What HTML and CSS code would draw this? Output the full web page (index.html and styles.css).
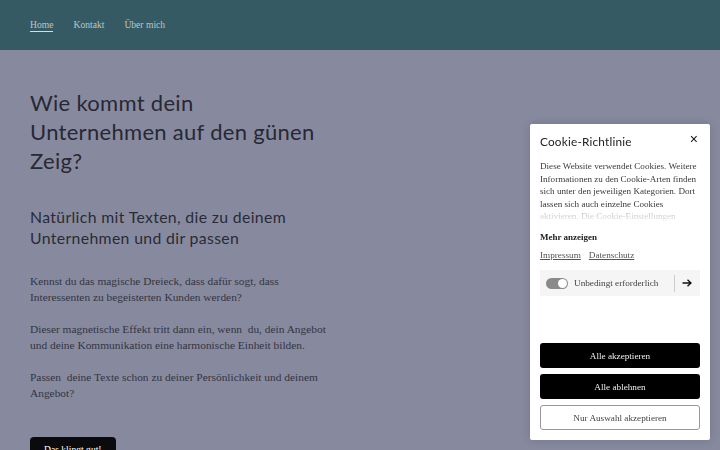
FILE: index.html
```html
<!DOCTYPE html>
<html lang="de">
<head>
    <meta charset="UTF-8">
    <meta name="viewport" content="width=device-width, initial-scale=1.0">
    <title>Texte für dein Unternehmen</title>
    <link rel="stylesheet" href="styles.css">
</head>
<body>
    <header class="site-header">
        <nav class="nav">
            <a href="#" class="nav-link active">Home</a>
            <a href="#" class="nav-link">Kontakt</a>
            <a href="#" class="nav-link">Über mich</a>
        </nav>
    </header>

    <main class="hero">
        <h1>Wie kommt dein<br>Unternehmen auf den günen<br>Zeig?</h1>
        <h2>Natürlich mit Texten, die zu deinem<br>Unternehmen und dir passen</h2>
        <p>Kennst du das magische Dreieck, dass dafür sogt, dass<br>Interessenten zu begeisterten Kunden werden?</p>
        <p>Dieser magnetische Effekt tritt dann ein, wenn&nbsp; du, dein Angebot<br>und deine Kommunikation eine harmonische Einheit bilden.</p>
        <p>Passen&nbsp; deine Texte schon zu deiner Persönlichkeit und deinem<br>Angebot?</p>
        <a href="#" class="btn">Das klingt gut!</a>
    </main>

    <aside class="cookie-box">
        <div class="cookie-head">
            <h3>Cookie-Richtlinie</h3>
            <button class="cookie-close">&times;</button>
        </div>
        <div class="cookie-text">
            <p>Diese Website verwendet Cookies. Weitere<br>Informationen zu den Cookie-Arten finden<br>sich unter den jeweiligen Kategorien. Dort<br>lassen sich auch einzelne Cookies<br>aktivieren. Die Cookie-Einstellungen</p>
        </div>
        <div class="cookie-more">Mehr anzeigen</div>
        <div class="cookie-links">
            <a href="#">Impressum</a>
            <a href="#">Datenschutz</a>
        </div>
        <div class="cookie-row">
            <span class="toggle"><span class="knob"></span></span>
            <span class="row-label">Unbedingt erforderlich</span>
            <span class="row-arrow">
                <svg width="10" height="8" viewBox="0 0 10 8"><path d="M0.5 4H9M5.5 0.8L9 4L5.5 7.2" fill="none" stroke="#111" stroke-width="1.3"/></svg>
            </span>
        </div>
        <div class="cookie-actions">
            <button class="cookie-btn dark">Alle akzeptieren</button>
            <button class="cookie-btn dark">Alle ablehnen</button>
            <button class="cookie-btn light">Nur Auswahl akzeptieren</button>
        </div>
    </aside>
</body>
</html>
```

FILE: styles.css
```css
body {
    margin: 0;
    padding: 0;
    background: #878a9f;
    font-family: 'Liberation Serif', 'DejaVu Serif', serif;
    color: #30313b;
    height: 450px;
    overflow: hidden;
}

.site-header {
    background: #365a63;
    height: 50px;
    display: flex;
    align-items: center;
    padding: 0 30px;
}

.nav {
    display: flex;
    gap: 20px;
}

.nav-link {
    color: #b9c6ca;
    text-decoration: none;
    font-size: 9.6px;
    padding-bottom: 1px;
}

.nav-link.active {
    border-bottom: 1px solid #d6dde0;
}

.hero {
    padding: 38px 30px 0;
}

h1 {
    font-family: Lato, 'Open Sans', sans-serif;
    font-weight: 400;
    font-size: 22px;
    line-height: 29px;
    letter-spacing: 0.3px;
    color: #272833;
    margin: 0 0 31px;
}

h2 {
    font-family: Lato, 'Open Sans', sans-serif;
    font-weight: 400;
    font-size: 15.8px;
    line-height: 21px;
    letter-spacing: 0.35px;
    color: #2a2b35;
    margin: 0 0 25px;
}

.hero p {
    font-size: 11.4px;
    line-height: 16px;
    margin: 0 0 16px;
    color: #33343f;
}

.btn {
    display: inline-block;
    margin-top: 20px;
    background: #0b0b0e;
    color: #fff;
    text-decoration: none;
    font-size: 9.6px;
    padding: 7px 14px 10px;
    border-radius: 4px;
}

/* cookie dialog lies over the page */
.cookie-box {
    position: fixed;
    top: 124px;
    right: 10px;
    width: 160px;
    height: 296px;
    padding: 10px;
    background: #fff;
    border-radius: 2px;
    box-shadow: 0 0 10px rgba(0, 0, 0, 0.15);
    display: flex;
    flex-direction: column;
    font-family: 'Liberation Serif', 'DejaVu Serif', serif;
    color: #333;
}

.cookie-head {
    display: flex;
    justify-content: space-between;
    align-items: center;
}

.cookie-head h3 {
    margin: 0;
    font-family: Lato, 'Open Sans', sans-serif;
    font-weight: 400;
    font-size: 11.8px;
    letter-spacing: 0.2px;
    color: #222;
}

.cookie-close {
    background: none;
    border: none;
    padding: 0;
    font-size: 14px;
    line-height: 1;
    color: #111;
    margin-top: -5px;
    margin-right: 2px;
}

.cookie-text {
    position: relative;
    height: 62px;
    overflow: hidden;
    margin-top: 11px;
}

.cookie-text::after {
    content: '';
    position: absolute;
    left: 0;
    right: 0;
    bottom: 0;
    height: 14px;
    background: linear-gradient(rgba(255, 255, 255, 0.55), rgba(255, 255, 255, 0.9));
}

.cookie-text p {
    margin: 0;
    font-size: 9.1px;
    line-height: 12.5px;
    color: #3a3a3a;
    white-space: nowrap;
}

.cookie-more {
    margin-top: 10px;
    font-size: 9px;
    font-weight: 700;
    color: #222;
}

.cookie-links {
    display: flex;
    gap: 8px;
    margin-top: 8px;
}

.cookie-links a {
    font-size: 9.2px;
    color: #555;
}

.cookie-row {
    display: flex;
    align-items: center;
    margin-top: 10px;
    height: 26px;
    background: #f5f5f5;
    padding: 0 6px;
}

.toggle {
    width: 22px;
    height: 11px;
    border-radius: 6px;
    background: #8a8a8a;
    display: flex;
    align-items: center;
    justify-content: flex-end;
    padding: 0 1px;
    box-sizing: border-box;
}

.knob {
    width: 9px;
    height: 9px;
    border-radius: 50%;
    background: #fff;
}

.row-label {
    flex: 1;
    margin-left: 6px;
    font-size: 9.2px;
    color: #444;
}

.row-arrow {
    display: flex;
    align-items: center;
    border-left: 1px solid #ccc;
    height: 17px;
    padding-left: 7px;
    margin-right: 2px;
}

.cookie-actions {
    margin-top: auto;
    display: flex;
    flex-direction: column;
    gap: 6px;
}

.cookie-btn {
    height: 25px;
    border-radius: 3px;
    font-family: 'Liberation Serif', 'DejaVu Serif', serif;
    font-size: 9.2px;
    cursor: pointer;
}

.cookie-btn.dark {
    background: #000;
    color: #eee;
    border: none;
}

.cookie-btn.light {
    background: #fff;
    color: #444;
    border: 1px solid #999;
}
```
